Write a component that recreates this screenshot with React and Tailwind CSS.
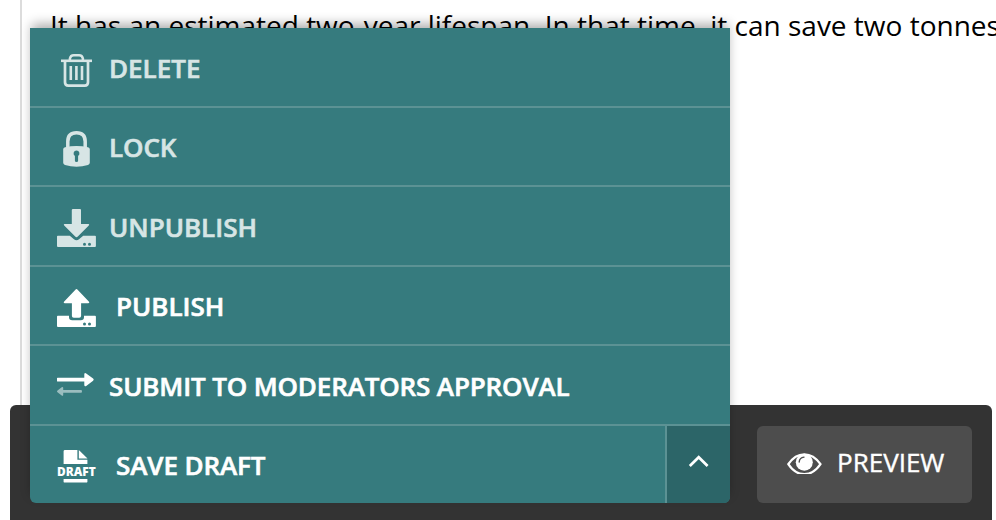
const svgProps = { fill: "none", xmlns: "http://www.w3.org/2000/svg", className: "block h-11 w-[42px] shrink-0" };

function TrashIcon() {
  return (
    <svg {...svgProps} viewBox="56 45 42 44" stroke="currentColor">
      <path d="M61 60.8H92" strokeWidth="2.6" />
      <path d="M69.9 60.5V58.6Q70.6 55.2 73.7 55.2H79.1Q82.2 55.2 82.9 58.6V60.5" strokeWidth="2.5" />
      <path d="M65 61V82.3Q65 85.7 68.3 85.7H84.7Q88 85.7 88 82.3V61" strokeWidth="2.7" />
      <path d="M70.8 66V80M76.4 66V80M82 66V80" strokeWidth="2.6" />
    </svg>
  );
}

function LockIcon() {
  return (
    <svg {...svgProps} viewBox="56 125 42 44">
      <path d="M67.8 148V141.5Q67.8 132.7 76.5 132.7T85.2 141.5V148" stroke="currentColor" strokeWidth="3.5" />
      <path fill="currentColor" fillRule="evenodd" d="M65 147.2Q76.5 144.6 88 147.2Q89.8 147.5 89.8 149.3V162.8Q89.8 164.4 88 165Q76.5 168.6 65 165Q63.2 164.4 63.2 162.8V149.3Q63.2 147.5 65 147.2ZM76.5 150.4A3 3 0 0 0 74.9 155.9V160.7Q74.9 162 76.5 162T78.1 160.7V155.9A3 3 0 0 0 76.5 150.4Z" />
    </svg>
  );
}

function UnpublishIcon() {
  return (
    <svg {...svgProps} viewBox="56 204 42 44" fill="currentColor">
      <path d="M73 209H80Q81 209 81 210V224H88.2Q90 224 88.8 225.4L77.8 236.6Q76.5 238 75.2 236.6L64.2 225.4Q63 224 64.8 224H71.8V210Q71.8 209 73 209Z" />
      <path fillRule="evenodd" d="M57.8 235.7H69.8L73.7 239.1Q76.5 241.5 79.3 239.1L83.2 235.7H95Q95.9 235.7 95.9 236.6V246Q95.9 247 95 247H58Q57 247 57 246V236.6Q57 235.7 57.8 235.7ZM84.5 242.7A1.5 1.5 0 1 0 84.5 245.7A1.5 1.5 0 1 0 84.5 242.7ZM89.5 242.7A1.5 1.5 0 1 0 89.5 245.7A1.5 1.5 0 1 0 89.5 242.7Z" />
    </svg>
  );
}

function PublishIcon() {
  return (
    <svg {...svgProps} viewBox="56 284 42 44" fill="currentColor">
      <path d="M75.4 289.7Q76.5 288.5 77.6 289.7L88.8 301.6Q90 303.2 88.2 303.2H81.1V316Q81.1 317.8 79.2 317.8H73.8Q71.9 317.8 71.9 316V303.2H64.8Q63 303.2 64.2 301.6Z" />
      <path fillRule="evenodd" d="M57.8 315.8H69V317Q69 320.2 72.2 320.2H80.8Q84 320.2 84 317V315.8H95Q95.9 315.8 95.9 316.7V326Q95.9 327 95 327H58Q57 327 57 326V316.7Q57 315.8 57.8 315.8ZM84.5 322.6A1.5 1.5 0 1 0 84.5 325.6A1.5 1.5 0 1 0 84.5 322.6ZM89.5 322.6A1.5 1.5 0 1 0 89.5 325.6A1.5 1.5 0 1 0 89.5 322.6Z" />
    </svg>
  );
}

function SubmitIcon() {
  return (
    <svg {...svgProps} viewBox="56 363 42 44" fill="currentColor">
      <path d="M57.6 377.8H84.3V374.3Q84.5 372.3 86.2 373.4L93.1 378.6Q94.4 379.6 93.1 380.7L86.2 385.9Q84.5 387 84.3 385V381.6H57.6Q57 381.6 57 381V378.4Q57 377.8 57.6 377.8Z" />
      <path opacity=".5" d="M81 390H63.2V387.8Q63 386.4 61.7 387.2L57.5 390.5Q56.4 391.4 57.5 392.3L61.7 395.5Q63 396.3 63.2 394.9V392.8H81Q82 392.8 82 391.4T81 390Z" />
    </svg>
  );
}

function DraftIcon() {
  return (
    <svg {...svgProps} viewBox="56 443 42 44" fill="currentColor">
      <path d="M65 450H77.4V459.8H87.4V464H63.6V451.2Q63.6 450 65 450Z" />
      <path d="M78.8 450.1L87.5 458.6H78.8Z" />
      <text x="57" y="475.9" textLength="38.8" lengthAdjust="spacingAndGlyphs" fontFamily="Open Sans" fontWeight="800" fontSize="12.8">DRAFT</text>
      <path d="M63.6 479H87.4V481.4Q87.4 482.6 86.2 482.6H64.8Q63.6 482.6 63.6 481.4Z" />
    </svg>
  );
}

function EyeIcon() {
  return (
    <svg className="block h-6 w-9 shrink-0" viewBox="786 450 36 24" fill="none">
      <path d="M788.3 464.2Q795 454.4 804.3 454.4T820.5 464.2Q813.7 474.2 804.3 474.2T788.3 464.2Z" stroke="white" strokeWidth="2.3" strokeLinejoin="round" />
      <circle cx="804.3" cy="462.2" r="8.5" fill="white" />
      <path d="M799.2 462Q799.5 457.6 804 457.1" stroke="#4d4d4d" strokeWidth="1.4" strokeLinecap="round" />
    </svg>
  );
}

const rows = [
  { label: "DELETE", Icon: TrashIcon, row: "h-20 text-[#d7e5e5]", text: "ml-[11px]" },
  { label: "LOCK", Icon: LockIcon, row: "h-[79px] text-[#d7e5e5]", text: "ml-[11px] tracking-[-0.1px]" },
  { label: "UNPUBLISH", Icon: UnpublishIcon, row: "h-20 text-[#d7e5e5]", text: "ml-[11px]" },
  { label: "PUBLISH", Icon: PublishIcon, row: "h-[79px] text-white", text: "ml-[18px]" },
  { label: "SUBMIT TO MODERATORS APPROVAL", Icon: SubmitIcon, row: "h-20 text-white", text: "ml-[11px] tracking-[-0.13px]" },
];

export default function App() {
  return (
    <div className="relative flex h-[520px] w-[996px] flex-col overflow-hidden bg-white font-['Open_Sans',sans-serif]">
      <main className="ml-5 h-[405px] border-l-2 border-[#dcdcdc] pl-7">
        <p className="pt-[5px] text-[28px] leading-[40px] whitespace-nowrap text-black">
          It has an estimated two-year lifespan. In that time, it can save two tonnes
        </p>
      </main>
      <footer className="mr-1 ml-2.5 flex h-[115px] justify-end rounded-t-md bg-[#333] pt-[21px] pr-5">
        <button className="flex h-[77px] w-[215px] items-center rounded-md bg-[#4d4d4d] pb-[5px] pl-[29px] text-white">
          <EyeIcon />
          <span className="ml-[15px] text-[26px] leading-9 [-webkit-text-stroke:0.4px_currentColor]">PREVIEW</span>
        </button>
      </footer>

      <div className="absolute top-7 left-[30px] flex h-[475px] w-[700px] flex-col rounded-b-md bg-[#367b7e] text-[26px] leading-9 font-semibold shadow-[0_-6px_12px_-2px_rgba(0,0,0,0.33)]">
        {rows.map(({ label, Icon, row, text }) => (
          <button key={label} className={`flex shrink-0 items-center border-b-2 border-[#5c9294] pl-[26px] ${row}`}>
            <Icon />
            <span className={`pt-px whitespace-nowrap [-webkit-text-stroke:0.6px_currentColor] ${text}`}>{label}</span>
          </button>
        ))}
        <div className="flex h-[77px] text-white">
          <button className="flex flex-1 items-center pl-[26px]">
            <DraftIcon />
            <span className="ml-[18px] pt-px tracking-[-0.1px] [-webkit-text-stroke:0.6px_currentColor]">SAVE DRAFT</span>
          </button>
          <button className="flex w-[65px] items-center justify-center rounded-br-md border-l-2 border-[#5c9294] bg-[#2c6568]">
            <svg className="h-4 w-6" viewBox="687 457 24 16" fill="none" overflow="visible">
              <path d="M689.8 466L698.7 457.2L707.6 466" stroke="white" strokeWidth="2.7" />
            </svg>
          </button>
        </div>
      </div>
    </div>
  );
}
